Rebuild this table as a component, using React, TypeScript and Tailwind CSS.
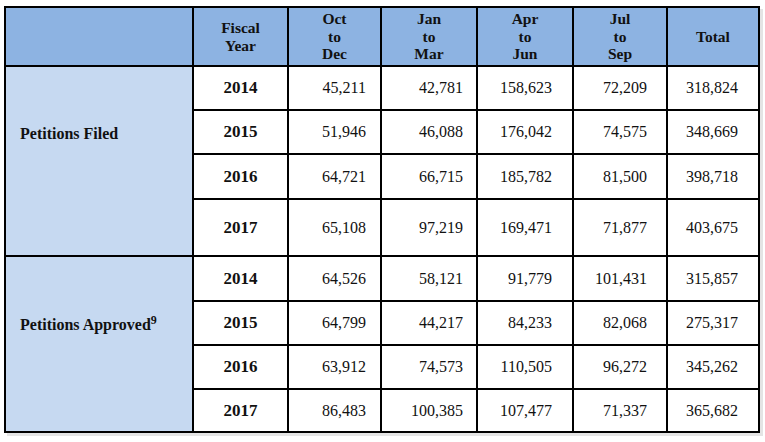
const headers = [
  ["Fiscal", "Year"],
  ["Oct", "to", "Dec"],
  ["Jan", "to", "Mar"],
  ["Apr", "to", "Jun"],
  ["Jul", "to", "Sep"],
  ["Total"],
]

const filed = [
  ["2014", "45,211", "42,781", "158,623", "72,209", "318,824"],
  ["2015", "51,946", "46,088", "176,042", "74,575", "348,669"],
  ["2016", "64,721", "66,715", "185,782", "81,500", "398,718"],
  ["2017", "65,108", "97,219", "169,471", "71,877", "403,675"],
]

const approved = [
  ["2014", "64,526", "58,121", "91,779", "101,431", "315,857"],
  ["2015", "64,799", "44,217", "84,233", "82,068", "275,317"],
  ["2016", "63,912", "74,573", "110,505", "96,272", "345,262"],
  ["2017", "86,483", "100,385", "107,477", "71,337", "365,682"],
]

// right padding for each numeric column
const pads = ["pr-[14px]", "pr-[13px]", "pr-[20px]", "pr-[19px]", "pr-[20px]"]

function DataRow({ row }: { row: string[] }) {
  return (
    <>
      <div className="bg-white flex items-center justify-center font-bold text-[17px]">{row[0]}</div>
      {row.slice(1).map((v, i) => (
        <div key={i} className={`bg-white flex items-center justify-end ${pads[i]}`}>
          {v}
        </div>
      ))}
    </>
  )
}

export default function App() {
  return (
    <div className="min-h-screen bg-white pt-[6px] pl-[4px]">
      <div
        className="grid w-fit grid-cols-[186px_93px_91px_94px_94px_92px_90px] grid-rows-[57px_42px_42px_43px_55px_43px_42px_42px_41px] gap-[2px] p-[2px] bg-black text-[16px] text-[#111] shadow-[3px_3px_0_#e4e4e4]"
        style={{ fontFamily: '"Liberation Serif", "Times New Roman", serif' }}
      >
        {/* header */}
        <div className="bg-[#8db3e2]" />
        {headers.map((h, i) => (
          <div
            key={i}
            className="bg-[#8db3e2] flex flex-col items-center justify-center font-bold text-[15.5px] leading-[17.5px]"
          >
            {h.map((t) => (
              <span key={t}>{t}</span>
            ))}
          </div>
        ))}

        {/* petitions filed */}
        <div className="row-span-4 bg-[#c6d9f1] pl-[14px] pt-[55px] font-bold">
          Petitions Filed
        </div>
        {filed.map((r) => (
          <DataRow key={r[0]} row={r} />
        ))}

        {/* petitions approved */}
        <div className="row-span-4 bg-[#c6d9f1] pl-[14px] pt-[56px] font-bold">
          Petitions Approved<sup className="text-[12px] font-bold">9</sup>
        </div>
        {approved.map((r) => (
          <DataRow key={r[0]} row={r} />
        ))}
      </div>
    </div>
  )
}
